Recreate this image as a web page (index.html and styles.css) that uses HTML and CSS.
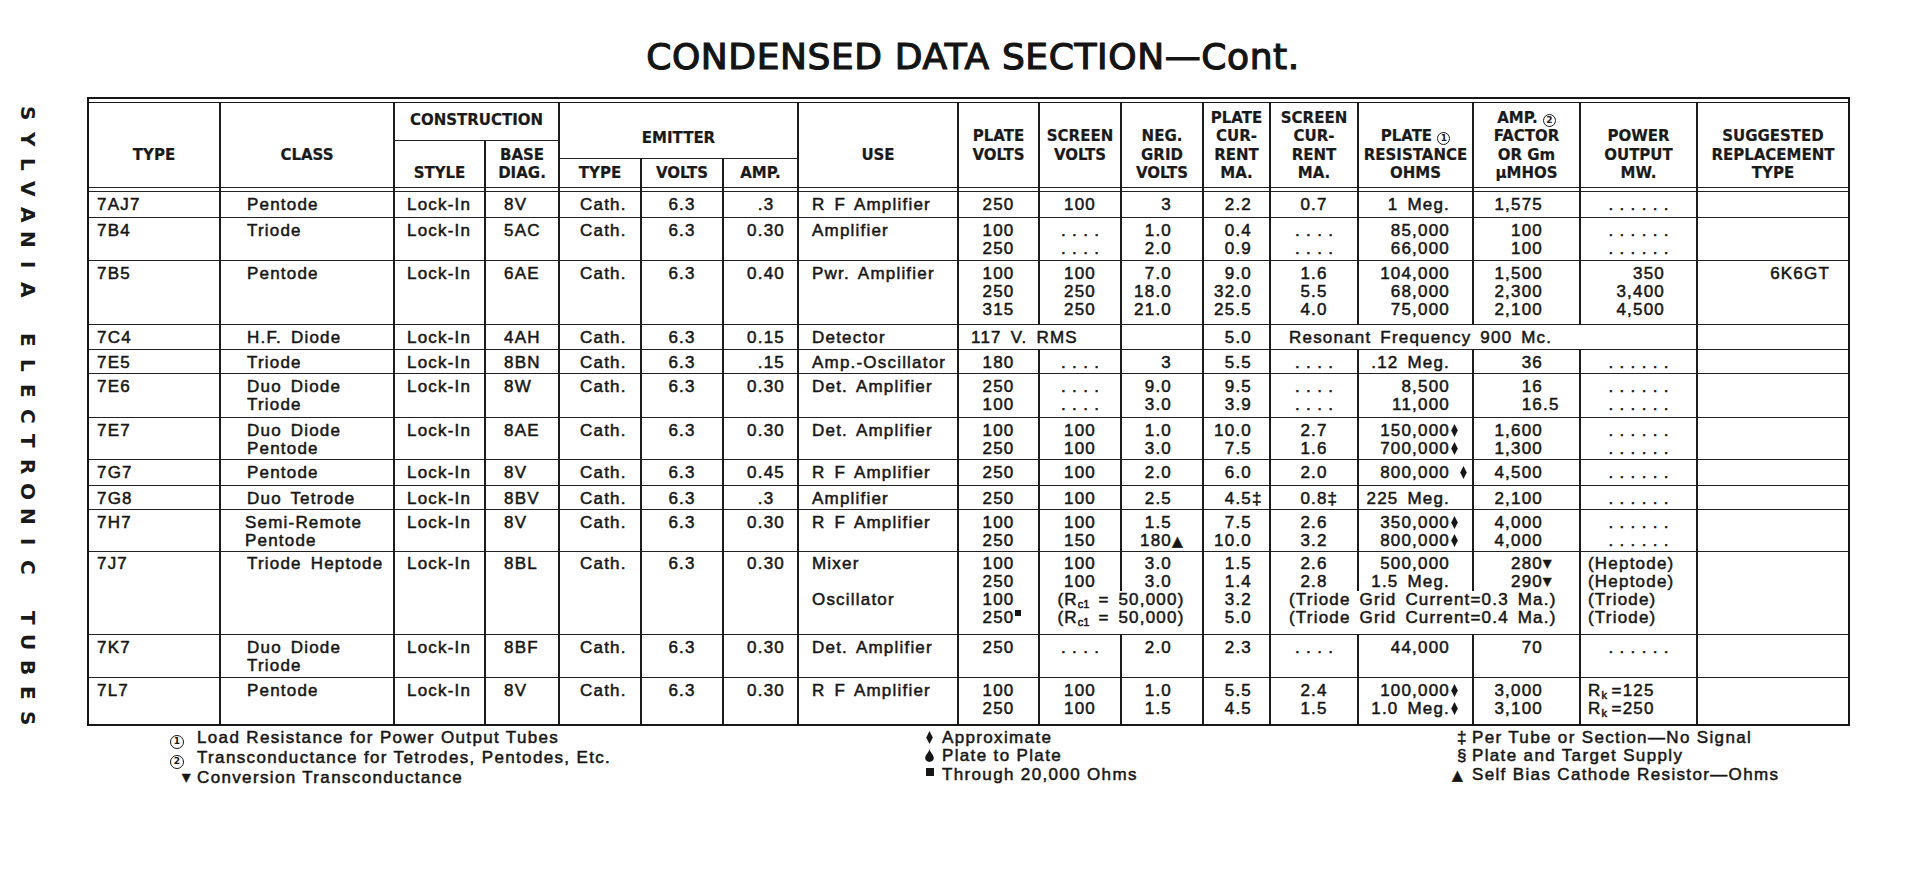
FILE: index.html
```html
<!DOCTYPE html>
<html>
<head>
<meta charset="utf-8">
<title>Condensed Data Section</title>
<link rel="stylesheet" href="styles.css">
</head>
<body>
<div class="page">
  <div class="side">
    <div class="vt"><span>S</span><span>Y</span><span>L</span><span>V</span><span>A</span><span>N</span><span>I</span><span>A</span><span> </span><span>E</span><span>L</span><span>E</span><span>C</span><span>T</span><span>R</span><span>O</span><span>N</span><span>I</span><span>C</span><span> </span><span>T</span><span>U</span><span>B</span><span>E</span><span>S</span></div>
  </div>
  <div class="main">
    <h1 class="title">CONDENSED DATA SECTION—Cont.</h1>
    <div class="tbl">
      <table>
        <colgroup>
          <col class="k1"><col class="k2"><col class="k3"><col class="k4"><col class="k5"><col class="k6"><col class="k7"><col class="k8"><col class="k9"><col class="k10"><col class="k11"><col class="k12"><col class="k13"><col class="k14"><col class="k15"><col class="k16"><col class="k17">
        </colgroup>
        <thead>
          <tr class="hr1">
            <th rowspan="3" class="u1">TYPE</th>
            <th rowspan="3" class="u1">CLASS</th>
            <th colspan="2" class="mid">CONSTRUCTION</th>
            <th colspan="3" rowspan="2" class="ue">EMITTER</th>
            <th rowspan="3" class="u1">USE</th>
            <th rowspan="3" class="u1">PLATE<br>VOLTS</th>
            <th rowspan="3" class="u1">SCREEN<br>VOLTS</th>
            <th rowspan="3">NEG.<br>GRID<br>VOLTS</th>
            <th rowspan="3">PLATE<br>CUR-<br>RENT<br>MA.</th>
            <th rowspan="3">SCREEN<br>CUR-<br>RENT<br>MA.</th>
            <th rowspan="3">PLATE <span class="ci">1</span><br>RESISTANCE<br>OHMS</th>
            <th rowspan="3">AMP. <span class="ci">2</span><br>FACTOR<br>OR G<span class="lc">m</span><br>µMHOS</th>
            <th rowspan="3">POWER<br>OUTPUT<br>MW.</th>
            <th rowspan="3">SUGGESTED<br>REPLACEMENT<br>TYPE</th>
          </tr>
          <tr class="hr2">
            <th rowspan="2">STYLE</th>
            <th rowspan="2">BASE<br>DIAG.</th>
          </tr>
          <tr class="hr3">
            <th>TYPE</th><th>VOLTS</th><th>AMP.</th>
          </tr>
        </thead>
        <tbody>
          <tr class="gap"><td></td><td></td><td></td><td></td><td></td><td></td><td></td><td></td><td></td><td></td><td></td><td></td><td></td><td></td><td></td><td></td><td></td></tr>

          <tr class="h26">
            <td class="c-t">7AJ7</td><td class="c-c">Pentode</td><td class="c-s">Lock-In</td><td class="c-b">8V</td><td class="c-e">Cath.</td><td class="c-v">6.3</td><td class="c-a">.3<span class="ph">0</span></td><td class="c-u">R F Amplifier</td>
            <td class="c-m">250</td><td class="c-m">100</td><td class="c-g">3</td><td class="c-p">2.2</td><td class="c-m">0.7</td><td class="c-r">1 Meg.</td><td class="c-f">1,575</td><td class="c-m"><span class="dots">......</span></td><td class="c-x"></td>
          </tr>

          <tr class="h43">
            <td class="c-t">7B4</td><td class="c-c">Triode</td><td class="c-s">Lock-In</td><td class="c-b">5AC</td><td class="c-e">Cath.</td><td class="c-v">6.3</td><td class="c-a">0.30</td><td class="c-u">Amplifier</td>
            <td class="c-m">100<br>250</td><td class="c-m"><span class="dots">....</span><br><span class="dots">....</span></td><td class="c-g">1.0<br>2.0</td><td class="c-p">0.4<br>0.9</td><td class="c-m"><span class="dots">....</span><br><span class="dots">....</span></td><td class="c-r">85,000<br>66,000</td><td class="c-f">100<br>100</td><td class="c-m"><span class="dots">......</span><br><span class="dots">......</span></td><td class="c-x"></td>
          </tr>

          <tr class="h64">
            <td class="c-t">7B5</td><td class="c-c">Pentode</td><td class="c-s">Lock-In</td><td class="c-b">6AE</td><td class="c-e">Cath.</td><td class="c-v">6.3</td><td class="c-a">0.40</td><td class="c-u">Pwr. Amplifier</td>
            <td class="c-m">100<br>250<br>315</td><td class="c-m">100<br>250<br>250</td><td class="c-g">7.0<br>18.0<br>21.0</td><td class="c-p">9.0<br>32.0<br>25.5</td><td class="c-m">1.6<br>5.5<br>4.0</td><td class="c-r">104,000<br>68,000<br>75,000</td><td class="c-f">1,500<br>2,300<br>2,100</td><td class="c-o">350<br>3,400<br>4,500</td><td class="c-x">6K6GT</td>
          </tr>

          <tr class="h25">
            <td class="c-t">7C4</td><td class="c-c">H.F. Diode</td><td class="c-s">Lock-In</td><td class="c-b">4AH</td><td class="c-e">Cath.</td><td class="c-v">6.3</td><td class="c-a">0.15</td><td class="c-u">Detector</td>
            <td colspan="2" class="c-l">117 V. RMS</td><td class="c-g"></td><td class="c-p">5.0</td><td colspan="4" class="c-w">Resonant Frequency 900 Mc.</td><td class="c-x"></td>
          </tr>

          <tr class="h24">
            <td class="c-t">7E5</td><td class="c-c">Triode</td><td class="c-s">Lock-In</td><td class="c-b">8BN</td><td class="c-e">Cath.</td><td class="c-v">6.3</td><td class="c-a">.15</td><td class="c-u">Amp.-Oscillator</td>
            <td class="c-m">180</td><td class="c-m"><span class="dots">....</span></td><td class="c-g">3</td><td class="c-p">5.5</td><td class="c-m"><span class="dots">....</span></td><td class="c-r">.12 Meg.</td><td class="c-f">36</td><td class="c-m"><span class="dots">......</span></td><td class="c-x"></td>
          </tr>

          <tr class="h44">
            <td class="c-t">7E6</td><td class="c-c">Duo Diode<br>Triode</td><td class="c-s">Lock-In</td><td class="c-b">8W</td><td class="c-e">Cath.</td><td class="c-v">6.3</td><td class="c-a">0.30</td><td class="c-u">Det. Amplifier</td>
            <td class="c-m">250<br>100</td><td class="c-m"><span class="dots">....</span><br><span class="dots">....</span></td><td class="c-g">9.0<br>3.0</td><td class="c-p">9.5<br>3.9</td><td class="c-m"><span class="dots">....</span><br><span class="dots">....</span></td><td class="c-r">8,500<br>11,000</td><td class="c-f">16<br>16<span class="hg">.5</span></td><td class="c-m"><span class="dots">......</span><br><span class="dots">......</span></td><td class="c-x"></td>
          </tr>

          <tr class="h42">
            <td class="c-t">7E7</td><td class="c-c">Duo Diode<br>Pentode</td><td class="c-s">Lock-In</td><td class="c-b">8AE</td><td class="c-e">Cath.</td><td class="c-v">6.3</td><td class="c-a">0.30</td><td class="c-u">Det. Amplifier</td>
            <td class="c-m">100<br>250</td><td class="c-m">100<br>100</td><td class="c-g">1.0<br>3.0</td><td class="c-p">10.0<br>7.5</td><td class="c-m">2.7<br>1.6</td>
            <td class="c-r">150,000<span class="hg"><svg class="lz" viewBox="0 0 6 12"><path d="M3 0L6 6L3 12L0 6Z"/></svg></span><br>700,000<span class="hg"><svg class="lz" viewBox="0 0 6 12"><path d="M3 0L6 6L3 12L0 6Z"/></svg></span></td>
            <td class="c-f">1,600<br>1,300</td><td class="c-m"><span class="dots">......</span><br><span class="dots">......</span></td><td class="c-x"></td>
          </tr>

          <tr class="h26">
            <td class="c-t">7G7</td><td class="c-c">Pentode</td><td class="c-s">Lock-In</td><td class="c-b">8V</td><td class="c-e">Cath.</td><td class="c-v">6.3</td><td class="c-a">0.45</td><td class="c-u">R F Amplifier</td>
            <td class="c-m">250</td><td class="c-m">100</td><td class="c-g">2.0</td><td class="c-p">6.0</td><td class="c-m">2.0</td>
            <td class="c-r">800,000<span class="hg">&nbsp;<svg class="lz" viewBox="0 0 6 12"><path d="M3 0L6 6L3 12L0 6Z"/></svg></span></td>
            <td class="c-f">4,500</td><td class="c-m"><span class="dots">......</span></td><td class="c-x"></td>
          </tr>

          <tr class="h24">
            <td class="c-t">7G8</td><td class="c-c">Duo Tetrode</td><td class="c-s">Lock-In</td><td class="c-b">8BV</td><td class="c-e">Cath.</td><td class="c-v">6.3</td><td class="c-a">.3<span class="ph">0</span></td><td class="c-u">Amplifier</td>
            <td class="c-m">250</td><td class="c-m">100</td><td class="c-g">2.5</td><td class="c-p">4.5<span class="hg">‡</span></td><td class="c-m">0.8<span class="hg">‡</span></td><td class="c-r">225 Meg.</td><td class="c-f">2,100</td><td class="c-m"><span class="dots">......</span></td><td class="c-x"></td>
          </tr>

          <tr class="h42">
            <td class="c-t">7H7</td><td class="c-c cs">Semi-Remote<br>Pentode</td><td class="c-s">Lock-In</td><td class="c-b">8V</td><td class="c-e">Cath.</td><td class="c-v">6.3</td><td class="c-a">0.30</td><td class="c-u">R F Amplifier</td>
            <td class="c-m">100<br>250</td><td class="c-m">100<br>150</td><td class="c-g">1.5<br>180<span class="hg"><span class="tri">▲</span></span></td><td class="c-p">7.5<br>10.0</td><td class="c-m">2.6<br>3.2</td>
            <td class="c-r">350,000<span class="hg"><svg class="lz" viewBox="0 0 6 12"><path d="M3 0L6 6L3 12L0 6Z"/></svg></span><br>800,000<span class="hg"><svg class="lz" viewBox="0 0 6 12"><path d="M3 0L6 6L3 12L0 6Z"/></svg></span></td>
            <td class="c-f">4,000<br>4,000</td><td class="c-m"><span class="dots">......</span><br><span class="dots">......</span></td><td class="c-x"></td>
          </tr>

          <tr class="mix">
            <td rowspan="2" class="c-t">7J7</td><td rowspan="2" class="c-c">Triode Heptode</td><td rowspan="2" class="c-s">Lock-In</td><td rowspan="2" class="c-b">8BL</td><td rowspan="2" class="c-e">Cath.</td><td rowspan="2" class="c-v">6.3</td><td rowspan="2" class="c-a">0.30</td>
            <td class="c-u">Mixer</td><td class="c-m">100<br>250</td><td class="c-m">100<br>100</td><td class="c-g">3.0<br>3.0</td><td class="c-p">1.5<br>1.4</td><td class="c-m">2.6<br>2.8</td><td class="c-r">500,000<br>1.5 Meg.</td>
            <td class="c-f">280<span class="hg"><span class="tri sm">▼</span></span><br>290<span class="hg"><span class="tri sm">▼</span></span></td><td class="c-n">(Heptode)<br>(Heptode)</td><td rowspan="2" class="c-x"></td>
          </tr>
          <tr class="osc">
            <td class="c-u">Oscillator</td><td class="c-m">100<br>250<span class="hg"><span class="sq"></span></span></td>
            <td colspan="2" class="c-m">(R<sub>c1</sub> = 50,000)<br>(R<sub>c1</sub> = 50,000)</td><td class="c-p">3.2<br>5.0</td>
            <td colspan="3" class="c-w">(Triode Grid Current=0.3 Ma.)<br>(Triode Grid Current=0.4 Ma.)</td><td class="c-n">(Triode)<br>(Triode)</td>
          </tr>

          <tr class="h43">
            <td class="c-t">7K7</td><td class="c-c">Duo Diode<br>Triode</td><td class="c-s">Lock-In</td><td class="c-b">8BF</td><td class="c-e">Cath.</td><td class="c-v">6.3</td><td class="c-a">0.30</td><td class="c-u">Det. Amplifier</td>
            <td class="c-m">250</td><td class="c-m"><span class="dots">....</span></td><td class="c-g">2.0</td><td class="c-p">2.3</td><td class="c-m"><span class="dots">....</span></td><td class="c-r">44,000</td><td class="c-f">70</td><td class="c-m"><span class="dots">......</span></td><td class="c-x"></td>
          </tr>

          <tr class="h46">
            <td class="c-t">7L7</td><td class="c-c">Pentode</td><td class="c-s">Lock-In</td><td class="c-b">8V</td><td class="c-e">Cath.</td><td class="c-v">6.3</td><td class="c-a">0.30</td><td class="c-u">R F Amplifier</td>
            <td class="c-m">100<br>250</td><td class="c-m">100<br>100</td><td class="c-g">1.0<br>1.5</td><td class="c-p">5.5<br>4.5</td><td class="c-m">2.4<br>1.5</td>
            <td class="c-r">100,000<span class="hg"><svg class="lz" viewBox="0 0 6 12"><path d="M3 0L6 6L3 12L0 6Z"/></svg></span><br>1.0 Meg.<span class="hg"><svg class="lz" viewBox="0 0 6 12"><path d="M3 0L6 6L3 12L0 6Z"/></svg></span></td>
            <td class="c-f">3,000<br>3,100</td><td class="c-n">R<sub>k</sub>&thinsp;=125<br>R<sub>k</sub>&thinsp;=250</td><td class="c-x"></td>
          </tr>
        </tbody>
      </table>
    </div>

    <div class="notes">
      <div class="col">
        <div><span class="sym"><span class="ci big">1</span></span>Load Resistance for Power Output Tubes</div>
        <div><span class="sym"><span class="ci big">2</span></span>Transconductance for Tetrodes, Pentodes, Etc.</div>
        <div><span class="sym ind"><span class="tri sm">▼</span></span>Conversion Transconductance</div>
      </div>
      <div class="col">
        <div><span class="sym s2"><svg class="lz" viewBox="0 0 6 12"><path d="M3 0L6 6L3 12L0 6Z"/></svg></span>Approximate</div>
        <div><span class="sym s2"><svg class="drop" viewBox="0 0 8 12"><path d="M4 0C4.6 3 8 5.8 8 8.4A4 3.6 0 0 1 0 8.4C0 5.8 3.4 3 4 0Z"/></svg></span>Plate to Plate</div>
        <div><span class="sym s2"><span class="sq big"></span></span>Through 20,000 Ohms</div>
      </div>
      <div class="col">
        <div><span class="sym s3 ind3">‡</span>Per Tube or Section—No Signal</div>
        <div><span class="sym s3 ind3">§</span>Plate and Target Supply</div>
        <div><span class="sym s3"><span class="tri">▲</span></span>Self Bias Cathode Resistor—Ohms</div>
      </div>
    </div>
  </div>
</div>
</body>
</html>
```

FILE: styles.css
```css
html, body {
  margin: 0;
  padding: 0;
  background: #ffffff;
  color: #181818;
}

.page {
  display: grid;
  grid-template-columns: 87px 1763px;
  width: 1913px;
  height: 878px;
  overflow: hidden;
}

/* vertical side legend */
.side {
  padding: 101px 0 0 18px;
}

.vt {
  writing-mode: vertical-rl;
  width: 20px;
  height: 640px;
  font: bold 20px/20px "DejaVu Sans", sans-serif;
  color: #1a1a1a;
}

.vt span {
  display: inline-block;
  inline-size: 25.2px;
  text-align: center;
}

/* main column */
.main {
  padding-top: 36px;
}

.title {
  margin: 0 0 19px;
  padding-left: 9px;
  text-align: center;
  font: normal 36px/42px "DejaVu Sans", sans-serif;
  letter-spacing: 0.6px;
  color: #141414;
  -webkit-text-stroke: 1.2px #141414;
}

.tbl {
  border: 2px solid #171717;
}

.tbl::before {
  content: "";
  display: block;
  height: 3px;
  border-bottom: 1px solid #171717;
}

table {
  width: 100%;
  table-layout: fixed;
  border-collapse: collapse;
  border-style: hidden;
}

.k1 { width: 131px; }
.k2 { width: 174px; }
.k3 { width: 91px; }
.k4 { width: 74px; }
.k5 { width: 82px; }
.k6 { width: 82px; }
.k7 { width: 75px; }
.k8 { width: 160px; }
.k9 { width: 81px; }
.k10 { width: 82px; }
.k11 { width: 82px; }
.k12 { width: 67px; }
.k13 { width: 88px; }
.k14 { width: 115px; }
.k15 { width: 107px; }
.k16 { width: 117px; }
.k17 { width: 151px; }

th, td {
  border-top: 1px solid #222;
  border-bottom: 1px solid #222;
  border-left: 2px solid #1c1c1c;
  border-right: 2px solid #1c1c1c;
}

/* header */
th {
  font: bold 15px/18.5px "DejaVu Sans", sans-serif;
  color: #1a1a1a;
  vertical-align: bottom;
  text-align: center;
  padding: 0 2px 4px;
  white-space: nowrap;
  -webkit-text-stroke: 0.2px #1a1a1a;
}

th.u1 { padding-bottom: 22.5px; }
th.mid { vertical-align: middle; padding: 0 2px 2px; }
th.ue { padding-bottom: 10px; }

.hr1 { height: 37px; }
.hr2 { height: 18px; }
.hr3 { height: 29px; }

.lc { text-transform: none; }

.ci {
  display: inline-block;
  box-sizing: border-box;
  width: 13px;
  height: 13px;
  border: 1.3px solid currentColor;
  border-radius: 50%;
  font: bold 9px/10.5px "DejaVu Sans", sans-serif;
  text-align: center;
  vertical-align: 0;
  letter-spacing: 0;
  -webkit-text-stroke: 0;
}

.ci.big {
  width: 14px;
  height: 14px;
  font-size: 9px;
  line-height: 11.5px;
  vertical-align: -1px;
}

/* body cells */
td {
  font: 17px/18px "Liberation Sans", Arial, sans-serif;
  letter-spacing: 1.2px;
  word-spacing: 3px;
  color: #161616;
  -webkit-text-stroke: 0.5px #161616;
  vertical-align: top;
  padding: 4px 0 0;
  white-space: nowrap;
}

tr.gap { height: 4px; }
tr.gap td {
  height: 3px;
  padding: 0;
  font-size: 0;
  line-height: 0;
}

.h24 { height: 24px; }
.h25 { height: 25px; }
.h26 { height: 26px; }
.h42 { height: 42px; }
.h43 { height: 43px; }
.h44 { height: 44px; }
.h46 { height: 46px; }
.h64 { height: 64px; }
.mix { height: 39px; }
.osc { height: 44px; }

.mix td { padding-top: 3px; }
.osc td { padding-top: 0; border-top-style: hidden; }

.c-t { text-align: left; padding-left: 8px; }
.c-c { text-align: left; padding-left: 26px; }
.c-c.cs { padding-left: 24px; }
.c-s { text-align: left; padding-left: 12px; }
.c-b { text-align: left; padding-left: 18px; }
.c-e { text-align: left; padding-left: 20px; }
.c-v { text-align: center; }
.c-a { text-align: right; padding-right: 12px; }
.c-u { text-align: left; padding-left: 13px; }
.c-m { text-align: center; }
.c-l { text-align: left; padding-left: 12px; }
.c-g { text-align: right; padding-right: 30px; }
.c-p { text-align: right; padding-right: 17px; }
.c-r { text-align: right; padding-right: 22px; }
.c-f { text-align: right; padding-right: 36px; }
.c-o { text-align: right; padding-right: 31px; }
.c-n { text-align: left; padding-left: 7px; }
.c-w { text-align: left; padding-left: 18px; }
.c-x { text-align: right; padding-right: 18px; }

.ph { visibility: hidden; }

.hg {
  display: inline-block;
  width: 0;
  white-space: nowrap;
  text-align: left;
}

.dots {
  letter-spacing: 6.3px;
  margin-right: -6.3px;
}

.lz {
  width: 7px;
  height: 13px;
  fill: #161616;
  vertical-align: -1px;
  margin-left: 1px;
}

.drop {
  width: 9px;
  height: 13px;
  fill: #161616;
  vertical-align: -1px;
}

.tri {
  font-family: "DejaVu Sans", sans-serif;
  font-size: 14px;
  letter-spacing: 0;
}

.tri.sm {
  font-size: 11px;
  vertical-align: 2px;
}

.sq {
  display: inline-block;
  width: 6px;
  height: 6px;
  background: #161616;
  vertical-align: 7px;
  margin-left: 1px;
}

.sq.big {
  width: 8px;
  height: 8px;
  vertical-align: 4px;
  margin-left: 1px;
}

sub {
  font-size: 11px;
  line-height: 0;
  vertical-align: -3px;
  letter-spacing: 0;
}

/* footnotes */
.notes {
  display: grid;
  grid-template-columns: 755px 527px auto;
  padding: 3px 0 0 83px;
  font: 17px/18.5px "Liberation Sans", Arial, sans-serif;
  letter-spacing: 1.35px;
  color: #161616;
  -webkit-text-stroke: 0.5px #161616;
  white-space: nowrap;
}

.sym {
  display: inline-block;
  width: 27px;
}

.sym.ind { padding-left: 12px; width: 15px; }
.sym.s2 { width: 17px; }
.sym.s3 { width: 20px; }
.sym.ind3 { padding-left: 5px; width: 15px; }
```
